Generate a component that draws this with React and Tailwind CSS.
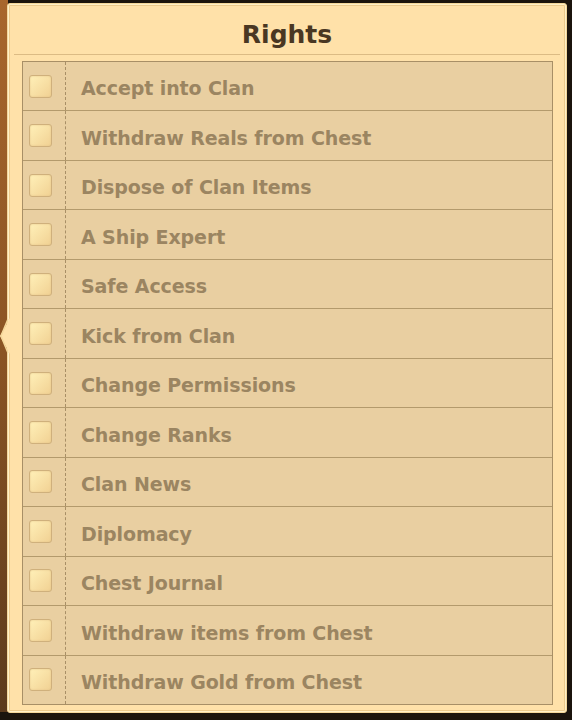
import React from "react"

const rights = [
  "Accept into Clan",
  "Withdraw Reals from Chest",
  "Dispose of Clan Items",
  "A Ship Expert",
  "Safe Access",
  "Kick from Clan",
  "Change Permissions",
  "Change Ranks",
  "Clan News",
  "Diplomacy",
  "Chest Journal",
  "Withdraw items from Chest",
  "Withdraw Gold from Chest",
]

function RightRow({ label, first }) {
  return (
    <div
      className={
        "flex flex-1 items-stretch " + (first ? "" : "border-t border-[#b39a6c]")
      }
    >
      <div className="flex w-[43px] shrink-0 items-center border-r border-dashed border-[#a88f66] pl-[6px]">
        <div className="h-[23px] w-[23px] rounded-[3px] border border-[#cfb07c] bg-gradient-to-br from-[#fff0b8] to-[#f1d193] shadow-[inset_0_0_2px_#e2c288]" />
      </div>
      <div className="flex items-center pl-[15px] pt-[5px] text-[19px] font-bold tracking-[-0.1px] text-[#9b8561]">
        {label}
      </div>
    </div>
  )
}

export default function App() {
  return (
    <div
      className="relative h-[720px] w-[572px] overflow-hidden bg-[#1b140d] pl-[7px] pt-[3px]"
      style={{ fontFamily: '"DejaVu Sans", Verdana, sans-serif' }}
    >
      <div className="absolute left-0 top-0 h-[712px] w-[8px] bg-gradient-to-b from-[#a8662c] via-[#8a5424] to-[#5c3a1c]" />
      <div className="relative flex h-[710px] w-[560px] flex-col rounded-[3px] border border-[#f4d79a] bg-[#ffe1a9] shadow-[inset_0_0_0_1px_#fff0c8,inset_0_0_0_2px_#ecca8c]">
        <div className="flex h-[50px] items-center justify-center pt-[12px] text-[25px] font-bold text-[#4a3722]">
          Rights
        </div>
        <div className="mx-[6px] h-px bg-[#dcbb84]" />
        <div className="ml-[14px] mt-[6px] flex h-[644px] w-[531px] flex-col border border-[#a88f66] bg-[#e9cfa1]">
          {rights.map((r, i) => (
            <RightRow key={r} label={r} first={i === 0} />
          ))}
        </div>
      </div>
      <svg
        className="absolute left-0 top-[318px]"
        width="10"
        height="36"
        viewBox="0 0 10 36"
      >
        <path d="M10 0 L0 18 L10 36 Z" fill="#ffe1a9" />
        <path d="M8 1 L1 18 L8 35" fill="none" stroke="#f4d79a" strokeWidth="1.5" />
      </svg>
    </div>
  )
}
